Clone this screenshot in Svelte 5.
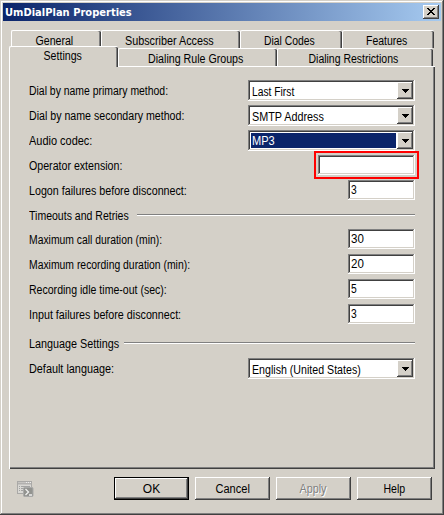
<script>
  // Condenses a label horizontally so that it takes up the given width.
  function fit(node, width) {
    if (width) node.style.transform = `scaleX(${width / node.offsetWidth})`;
  }
  const backTabs = [
    { text: 'General', w: 90, t: 38 },
    { text: 'Subscriber Access', w: 139, t: 89 },
    { text: 'Dial Codes', w: 102, t: 51 },
    { text: 'Features', w: 92, t: 41 }
  ];
  const frontTabs = [
    { text: 'Settings', w: 109, t: 38, active: true },
    { text: 'Dialing Rule Groups', w: 159, t: 95 },
    { text: 'Dialing Restrictions', w: 156, t: 90 }
  ];
  const rows = [
    { label: 'Dial by name primary method:', t: 139, combo: 'Last First', v: 42 },
    { label: 'Dial by name secondary method:', t: 155, combo: 'SMTP Address', v: 72 },
    { label: 'Audio codec:', t: 63, combo: 'MP3', v: 23, selected: true },
    { label: 'Operator extension:', t: 93, value: '', marked: true },
    { label: 'Logon failures before disconnect:', t: 158, value: '3', v: 6 },
    { section: 'Timeouts and Retries', t: 100, gap: 108 },
    { label: 'Maximum call duration (min):', t: 133, value: '30', v: 12.5 },
    { label: 'Maximum recording duration (min):', t: 161, value: '20', v: 12.5 },
    { label: 'Recording idle time-out (sec):', t: 138, value: '5', v: 6 },
    { label: 'Input failures before disconnect:', t: 152, value: '3', v: 6 },
    { section: 'Language Settings', t: 90, gap: 95, last: true },
    { label: 'Default language:', t: 85, combo: 'English (United States)', v: 109 }
  ];
  const buttons = [
    { text: 'OK', t: 17, def: true },
    { text: 'Cancel', t: 34 },
    { text: 'Apply', t: 27, disabled: true },
    { text: 'Help', t: 22 }
  ];
</script>

{#snippet tab(item)}
  <div class="tab" class:active={item.active} style:width="{item.w}px">
    <span class="text" use:fit={item.t}>{item.text}</span>
  </div>
{/snippet}

<div class="window">
  <header>
    <span class="title text" use:fit={126.5}>UmDialPlan Properties</span>
    <div class="close">
      <svg width="8" height="7" viewBox="0 0 8 7" shape-rendering="crispEdges">
        <path d="M0 0h2v1h1v1h2V1h1V0h2v1H7v1H6v1H5v1h1v1h1v1h1v1H6V6H5V5H3v1H2v1H0V6h1V5h1V4h1V3H2V2H1V1H0z" />
      </svg>
    </div>
  </header>

  <nav class="back">{#each backTabs as item}{@render tab(item)}{/each}</nav>
  <nav class="front">{#each frontTabs as item}{@render tab(item)}{/each}</nav>

  <main>
    {#each rows as r}
      {#if r.section}
        <div class="section" class:last={r.last}>
          <span class="caption" style:width="{r.gap}px"><span class="text" use:fit={r.t}>{r.section}</span></span>
          <i class="line"></i>
        </div>
      {:else}
        <div class="row">
          <span class="text" use:fit={r.t}>{r.label}</span>
          {#if r.combo}
            <div class="field combo" class:selected={r.selected}>
              <div class="value"><span class="text" use:fit={r.v}>{r.combo}</span></div>
              <div class="drop">
                <svg width="7" height="4" viewBox="0 0 7 4" shape-rendering="crispEdges"><path d="M0 0h7v1H6v1H5v1H4v1H3V3H2V2H1V1H0z" /></svg>
              </div>
            </div>
          {:else}
            <div class="field input" class:wide={r.marked}>
              <span class="text" use:fit={r.v}>{r.value}</span>
              {#if r.marked}<i class="mark"></i>{/if}
            </div>
          {/if}
        </div>
      {/if}
    {/each}
  </main>

  <footer>
    <svg class="script" width="17" height="17" viewBox="0 0 17 17">
      <rect x=".5" y=".5" width="14" height="12" fill="#d9d8d4" stroke="#aaa9a7" />
      <path d="M1 2.5h13" stroke="#b2b1af" stroke-width="2" />
      <path d="M9 1.5h1m1 0h1m1 0h1" stroke="#eee" />
      <path d="M2 5.500h1m1 0h9M2 7.500h1m1 0h4M2 9.500h1m1 0h3" stroke="#a3a3a2" />
      <rect x="6.500" y="6.500" width="9.500" height="9" rx="1" fill="#92938f" stroke="#a9a9a8" />
      <path d="M8.500 8l3 3-3 3M12 14h3" fill="none" stroke="#f0f0ef" stroke-width="1.300" />
    </svg>
    {#each buttons as b}
      <div class="button" class:def={b.def} class:disabled={b.disabled}>
        <span class="text" use:fit={b.t}>{b.text}</span>
      </div>
    {/each}
  </footer>
</div>

<style>
  .window {
    box-sizing: border-box;
    width: 444px;
    height: 515px;
    padding: 3px;
    overflow: hidden;
    background: #d4d0c8;
    box-shadow: inset -1px -1px #404040, inset 1px 1px #d4d0c8, inset -2px -2px #808080, inset 2px 2px #fff;
    color: #000;
    font: 12px/14px "Liberation Sans", Arial, sans-serif;
    display: flex;
    flex-direction: column;
  }
  .text { display: inline-block; white-space: pre; transform-origin: left center; }
  header {
    height: 18px;
    flex: none;
    display: flex;
    align-items: center;
    justify-content: space-between;
    padding: 0 2px;
    background: linear-gradient(90deg, #0a246a, #a6caf0);
  }
  .title { color: #fff; font: bold 11px/14px "DejaVu Sans", Tahoma, sans-serif; padding-top: 1px; }
  .close {
    box-sizing: border-box;
    width: 16px;
    height: 14px;
    display: flex;
    padding: 3px 0 0 4px;
    background: #d4d0c8;
    box-shadow: inset -1px -1px #404040, inset 1px 1px #fff, inset -2px -2px #808080;
  }
  nav { display: flex; flex: none; }
  nav .text { transform-origin: center; }
  .back { height: 16px; margin: 9px 0 0 8px; }
  .front { height: 20px; margin-left: 6px; align-items: flex-end; }
  .tab {
    box-sizing: border-box;
    height: 18px;
    flex: none;
    padding: 3px 4px 0 0;
    text-align: center;
    border-top: 1px solid #fff;
    border-left: 1px solid #fff;
    border-radius: 2px 2px 0 0;
    box-shadow: inset -1px 0 #404040, inset -2px 0 #808080;
    background: #d4d0c8;
  }
  .front .tab { position: relative; }
  .front .tab.active { height: 21px; margin-bottom: -1px; padding: 2px 3px 0 0; z-index: 1; }
  main {
    box-sizing: border-box;
    width: 426px;
    height: 403px;
    flex: none;
    margin-left: 6px;
    padding: 13px 20px 0 19px;
    border-top: 1px solid #fff;
    border-left: 1px solid #fff;
    box-shadow: inset -1px -1px #404040, inset -2px -2px #808080;
  }
  .row {
    height: 21px;
    margin-bottom: 4px;
    display: flex;
    align-items: center;
    justify-content: space-between;
  }
  .section { height: 24px; display: flex; align-items: flex-start; box-sizing: border-box; }
  .section .caption { flex: none; padding-top: 4px; }
  .section .line { flex: 1; height: 1px; margin-top: 9px; background: #808080; border-bottom: 1px solid #fff; }
  .section.last { height: 29px; }
  .section.last .caption { padding-top: 8px; }
  .section.last .line { margin-top: 13px; }
  .field {
    box-sizing: border-box;
    display: flex;
    background: #fff;
    box-shadow: inset -1px -1px #fff, inset 1px 1px #808080, inset -2px -2px #d4d0c8, inset 2px 2px #404040;
  }
  .combo { width: 167px; height: 21px; padding: 2px; }
  .value { flex: 1; padding: 3px 0 0 2px; margin-right: 1px; }
  .selected .value { background: #0a246a; color: #fff; margin-left: 1px; margin-top: 1px; margin-bottom: 1px; padding: 1px 0 0 1px; }
  .drop {
    width: 16px;
    display: flex;
    align-items: center;
    justify-content: center;
    background: #d4d0c8;
    box-shadow: inset -1px -1px #404040, inset 1px 1px #fff, inset -2px -2px #808080;
  }
  .input { position: relative; width: 67px; height: 20px; padding: 3px; align-self: flex-start; }
  .input.wide { width: 97px; }
  .mark { position: absolute; inset: -4px -4px -4px -4px; border: 2px solid #f00; }
  footer { display: flex; flex: none; margin: 8px 0 0 14px; gap: 6px; }
  .script { margin: 4px 74px 0 0; }
  .button {
    box-sizing: border-box;
    width: 75px;
    height: 23px;
    padding-top: 5px;
    text-align: center;
    box-shadow: inset -1px -1px #404040, inset 1px 1px #fff, inset -2px -2px #808080;
  }
  .button .text { transform-origin: center; }
  .def { box-shadow: inset 0 0 0 1px #000, inset -2px -2px #404040, inset 2px 2px #fff, inset -3px -3px #808080; }
  .disabled { color: #808080; text-shadow: 1px 1px #fff; }
</style>
